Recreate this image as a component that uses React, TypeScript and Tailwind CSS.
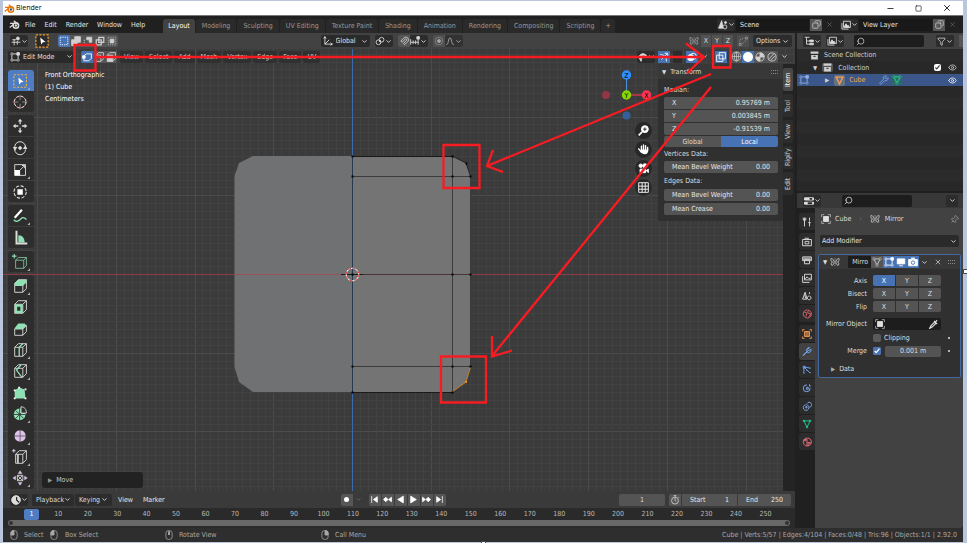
import type { ReactNode } from "react";
import { ChevronDown, Copy, Eye, Filter, Minus, Pin, Search, Square, Wrench, X } from "lucide-react";

const mint = "#8fe0b4";
const light = "#dcdcdc";
const lilac = "#dcc3e8";

const tabs = [
  "Modeling",
  "Sculpting",
  "UV Editing",
  "Texture Paint",
  "Shading",
  "Animation",
  "Rendering",
  "Compositing",
  "Scripting",
];

const meshMenus = ["View", "Select", "Add", "Mesh", "Vertex", "Edge", "Face", "UV"];

const frames = Array.from({ length: 25 }, (_, i) => (i + 1) * 10);

function Svg({ children, className = "size-[10px]" }: { children: ReactNode; className?: string }) {
  return (
    <svg viewBox="0 0 16 16" fill="none" stroke="currentColor" strokeWidth="1.4" className={`shrink-0 ${className}`}>
      {children}
    </svg>
  );
}

function Chevron() {
  return <ChevronDown className="pointer-events-none size-[7px] shrink-0" strokeWidth={3} />;
}

function BlenderLogo({ orange = false }: { orange?: boolean }) {
  return (
    <Svg className="size-[11px]">
      <path d="M7 2.500 13 7.500M1.500 6.500H10M1 12.500 6.500 8" stroke={orange ? "#ea7600" : light} strokeWidth="1.8" />
      <circle cx="10" cy="9.5" r="4" stroke={orange ? "#ea7600" : light} strokeWidth="2.2" />
      <circle cx="10" cy="9.5" r="1.7" fill={orange ? "#265787" : light} stroke="none" />
    </Svg>
  );
}

const icons = {
  editor: (
    <Svg>
      <path d="M1 10h14M5 5v10M10 8v6M2 6h6" />
      <circle cx="11" cy="4" r="2.4" fill="currentColor" />
    </Svg>
  ),
  editMode: (
    <Svg>
      <path d="M5 3h6M3 5v6M13 5v6M5 13h6" />
      <path d="M1.5 1.5h3v3h-3zM1.5 11.5h3v3h-3zM11.5 11.5h3v3h-3z" strokeWidth="1" />
      <path d="M11 1h4v4h-4z" fill="currentColor" />
    </Svg>
  ),
  axes: (
    <Svg>
      <path d="M3 1v12h12M3 13l7-7M1 4l2-3 2 3M12 11l3 2-3 2" />
    </Svg>
  ),
  pivot: (
    <Svg>
      <circle cx="5.5" cy="10" r="3.8" />
      <circle cx="10.5" cy="6" r="3.8" />
      <circle cx="8" cy="8" r="1" fill="currentColor" />
    </Svg>
  ),
  magnet: (
    <Svg>
      <path d="M3 8 8 3a4 4 0 0 1 6 6l-5 5-2-2 5-5a1.4 1.4 0 0 0-2-2l-5 5z" />
    </Svg>
  ),
  snap: (
    <Svg>
      <path d="M1 5v9M1 10h13M5 7v6M9 7v6M13 6v8" />
      <path d="M11 1h4v4h-4z" fill="currentColor" />
    </Svg>
  ),
  proportional: (
    <Svg>
      <circle cx="8" cy="8" r="6" strokeWidth=".8" />
      <circle cx="8" cy="8" r="2.4" fill="currentColor" />
    </Svg>
  ),
  falloff: (
    <Svg>
      <path d="M2 14c4 0 3-11 6-11s2 11 6 11" />
    </Svg>
  ),
  merge: (
    <Svg>
      <path d="M3 13V6l7-3M6 13l7-6" strokeDasharray="2 1.500" />
      <path d="M2 12h3v3H2zM12 2h3v3h-3z" />
    </Svg>
  ),
  butterfly: (
    <Svg>
      <path d="M8 2v12" strokeDasharray="2 1.500" strokeWidth="1" />
      <path
        d="M6.500 7C5 3 3 2 1.500 2.500 1 5 2 7.500 4 8c-2 .5-2.500 3-1.500 5C4 14 6 12 6.500 9zM9.500 7C11 3 13 2 14.500 2.500 15 5 14 7.500 12 8c2 .5 2.500 3 1.500 5-1.500 1-3.500-1-4-4z"
        strokeWidth="1.200"
      />
    </Svg>
  ),
  scene: (
    <Svg>
      <path d="M6 1 1 13h7z" fill="currentColor" />
      <circle cx="11" cy="11" r="3.2" />
      <circle cx="12" cy="4" r="1.6" fill="currentColor" />
    </Svg>
  ),
  layers: (
    <Svg>
      <path d="M4 2h11v10H4zM1.500 5v9.500H12" />
      <path d="m5 11 3-5 2 3 1-1 2 3z" fill="currentColor" />
    </Svg>
  ),
  tree: (
    <Svg>
      <path d="M1 2h8M4 2v11h4M4 8h4" />
      <path d="M9 6.500h6v2.500H9zM9 11.500h6V14H9z" fill="currentColor" />
    </Svg>
  ),
  visibility: (
    <Svg>
      <path d="M1 8c3-7 11-7 14 0M1 8l4 7 1-6z" fill="currentColor" />
      <circle cx="9" cy="7" r="2" fill="#2c2c2c" />
    </Svg>
  ),
  box: (
    <Svg className="size-[9px]">
      <path d="M1 1h14v4H1zM2 7h12v8H2z" fill="currentColor" stroke="none" />
      <path d="M6 9.500h4" stroke="#333" strokeWidth="2" />
    </Svg>
  ),
  mesh: (
    <Svg>
      <path d="M3 3h10L8 13z" />
      <path d="M1.500 1.500h3v3h-3zM11.500 1.500h3v3h-3zM6.500 11.500h3v3h-3z" strokeWidth="1" fill="#2b2b2b" />
    </Svg>
  ),
  object: (
    <Svg>
      <path d="M4 4h8v8H4z" fill="currentColor" />
      <path d="M1 5V1h4M11 1h4v4M15 11v4h-4M5 15H1v-4" strokeWidth="1" />
    </Svg>
  ),
  properties: (
    <Svg>
      <path d="M2 4.500h12M2 11.500h12" strokeWidth="5" strokeLinecap="round" />
      <path d="M9 4.500h4M6 11.500h7" strokeWidth="3" stroke="#2c2c2c" />
    </Svg>
  ),
  camera: (
    <Svg>
      <path d="M1 4h14v10H1z" fill="currentColor" />
      <path d="M5 2h6" strokeWidth="2" />
      <circle cx="8" cy="9" r="2.8" stroke="#4772b3" />
    </Svg>
  ),
  monitor: (
    <Svg>
      <path d="M2 3h12v8H2z" fill="currentColor" />
      <path d="M5 14h6" />
    </Svg>
  ),
  sphere: (
    <Svg className="size-[11px]">
      <circle cx="8" cy="8" r="6.500" strokeWidth="1" />
      <path d="M8 1.500v13M1.500 8h13" strokeWidth="1" />
      <ellipse cx="8" cy="8" rx="3" ry="6.500" strokeWidth="1" />
    </Svg>
  ),
};

const cubeOutline = <path d="M2 5h9v10H2zM2 5l4-4h9l-4 4M15 1v10l-4 4" stroke={light} strokeWidth="1" />;

const tools = [
  [
    {
      name: "Select Box",
      icon: (
        <>
          <path d="M1 1h14v14H1z" stroke="#f0b240" strokeDasharray="2.500 1.500" strokeWidth="1.200" />
          <path d="m6 4 6 5-3 .5L7 12z" fill="#fff" stroke="none" />
        </>
      ),
      more: true,
    },
    {
      name: "Cursor",
      icon: (
        <>
          <circle cx="8" cy="8" r="6.500" stroke="#b96a6a" strokeWidth="1" />
          <circle cx="8" cy="8" r="6.500" stroke="#eee" strokeWidth="1" strokeDasharray="3 2.100" />
          <path d="M8 0v6M8 10v6M0 8h6M10 8h6" stroke="#909090" strokeWidth="1" />
        </>
      ),
    },
  ],
  [
    {
      name: "Move",
      icon: (
        <>
          <path d="M8 2v4M8 10v4M2 8h4M10 8h4" stroke={light} />
          <path d="M8 0 5.500 3h5zM8 16l-2.500-3h5zM0 8l3-2.500v5zM16 8l-3-2.500v5z" fill={light} stroke="none" />
        </>
      ),
    },
    {
      name: "Rotate",
      icon: (
        <>
          <path d="M2 7a6 6 0 0 1 12 0M14 9.500a6 6 0 0 1-12 0" stroke={light} strokeWidth="1.100" />
          <path d="m0 7 2.200 4L5 7zM11 9l3-4 2 4zM8 5.500 10.500 8 8 10.500 5.500 8z" fill={light} stroke="none" />
        </>
      ),
    },
    {
      name: "Scale",
      icon: (
        <>
          <path d="M2 2h12v12H2zM8 8l5-5M10 3h3v3" stroke={light} strokeWidth="1" />
          <path d="M2 8h6v6H2z" fill="#fff" stroke="none" />
        </>
      ),
      more: true,
    },
    {
      name: "Transform",
      icon: (
        <>
          <circle cx="8" cy="8" r="6.800" stroke={light} strokeWidth="1.200" strokeDasharray="3.500 1.800" />
          <path d="M5 5h6v6H5z" fill="#fff" stroke="none" />
        </>
      ),
    },
  ],
  [
    {
      name: "Annotate",
      icon: (
        <>
          <path d="M2 10 10 1" stroke="#fff" strokeWidth="2.400" />
          <path d="M1 12c2 4 6 1 8-1s5-1 6 1" stroke={mint} />
        </>
      ),
      more: true,
    },
    {
      name: "Measure",
      icon: (
        <>
          <path d="M6 5c5 0 7 4 7 8H6z" fill={mint} stroke="none" />
          <path d="M4 0v14h12" stroke={light} strokeWidth="2.200" />
        </>
      ),
    },
  ],
  [
    {
      name: "Add Cube",
      icon: (
        <>
          <path d="M3 6h9v9H3zM3 6l3-3h9l-3 3M15 3v9l-3 3" stroke={mint} strokeWidth="1" opacity=".8" />
          <path d="M1.500-1v5M-1 1.500h5" stroke={mint} strokeWidth="1.200" />
        </>
      ),
      more: true,
    },
  ],
  [
    {
      name: "Extrude Region",
      icon: (
        <>
          {cubeOutline}
          <path d="m2 5 4-4h9l-4 4zM2 5h9v3H2zM11 5l4-4v3l-4 4z" fill={mint} stroke="none" />
        </>
      ),
      more: true,
    },
    {
      name: "Inset Faces",
      icon: (
        <>
          {cubeOutline}
          <path d="M3.500 6.500h6v7h-6z" stroke={mint} strokeWidth="2.500" />
        </>
      ),
    },
    {
      name: "Bevel",
      icon: (
        <>
          <path d="M2 8v7h9V8M15 4v7l-4 4M2 8h9l4-4" stroke={light} strokeWidth="1" />
          <path d="m2 7 4-5h7l2 2-4 4H2z" fill={mint} stroke="none" />
        </>
      ),
    },
    {
      name: "Loop Cut",
      icon: (
        <>
          {cubeOutline}
          <path d="M7 15V5l4-4" stroke={mint} strokeWidth="1.500" />
        </>
      ),
      more: true,
    },
    {
      name: "Knife",
      icon: (
        <>
          {cubeOutline}
          <path d="m9 1-5 6 6 8" stroke={mint} strokeWidth="1.500" />
        </>
      ),
      more: true,
    },
    {
      name: "Poly Build",
      icon: (
        <>
          <path d="m2 5 5-3 6 2 1 10H2z" fill={mint} stroke="none" />
          <path d="M1 4h2v2H1zM6 1h2v2H6zM13 3h2v2h-2zM1 13h2v2H1zM13 13h2v2h-2z" fill="#fff" stroke="none" />
        </>
      ),
    },
    {
      name: "Spin",
      icon: (
        <>
          <circle cx="7.500" cy="8.500" r="6.500" fill={mint} stroke="none" />
          <path d="M1 8.500h13M7.500 2v13M3 4l9 9M12 4l-9 9" stroke="#2b2b2b" strokeWidth=".9" />
          <path d="M9 0v7h6c0-4-2-7-6-7z" fill="#303030" stroke={light} strokeWidth="1" />
        </>
      ),
      more: true,
    },
    {
      name: "Smooth",
      icon: (
        <>
          <rect x="2" y="2" width="12" height="12" rx="5" fill={lilac} stroke="none" />
          <path d="M2 8h12M8 2v12" stroke="#6b5674" strokeWidth="1" />
        </>
      ),
      more: true,
    },
    {
      name: "Edge Slide",
      icon: (
        <>
          <path d="M3 5h8v10H3zM3 5l4-4h8l-4 4M15 1v10l-4 4M6 15V5" stroke={light} strokeWidth="1" />
          <path d="M5 5v10M1-1v4M-1 1h4" stroke={lilac} strokeWidth="1.200" />
        </>
      ),
      more: true,
    },
    {
      name: "Shrink Fatten",
      icon: (
        <>
          <path d="M5 5h6v6H5zM5 5l6 6M11 5l-6 6" stroke={light} strokeWidth="1" />
          <path d="M8 0 6 3h4zM8 16l-2-3h4zM0 8l3-2v4zM16 8l-3-2v4z" fill={lilac} stroke={lilac} strokeWidth=".6" />
        </>
      ),
      more: true,
    },
  ],
];

function Menu({ children }: { children: ReactNode }) {
  return <button className="h-[12px] rounded-[2px] px-[3px] text-[#e6e6e6] hover:bg-white/10">{children}</button>;
}

function IconMenu({ icon, label }: { icon: ReactNode; label: string }) {
  return (
    <button
      aria-label={label}
      className="flex h-[12px] w-[18px] shrink-0 items-center justify-center rounded-[2px] bg-[#2c2c2c] text-[#dcdcdc]"
    >
      {icon}
      <Chevron />
    </button>
  );
}

function Toggle({ label, on = false, children }: { label: string; on?: boolean; children: ReactNode }) {
  return (
    <button
      aria-label={label}
      className={`flex h-[12px] w-[12px] shrink-0 items-center justify-center ${
        on ? "bg-[#4772b3] text-white" : "bg-[#565656] text-[#d0d0d0]"
      }`}
    >
      {children}
    </button>
  );
}

function Dropdown({ label, value, icon }: { label: string; value: string; icon?: ReactNode }) {
  return (
    <label className="flex h-[12px] w-full items-center gap-[3px] rounded-[2px] bg-[#2a2a2a] px-[2px] text-[#e0e0e0]">
      {icon}
      <select aria-label={label} className="min-w-0 flex-1 appearance-none bg-transparent outline-none">
        <option>{value}</option>
      </select>
      <Chevron />
    </label>
  );
}

function NumberField({ label, value, className = "" }: { label: string; value: string; className?: string }) {
  return (
    <label className={`flex h-[12px] items-center bg-[#545454] px-[8px] text-[#e6e6e6] ${className}`}>
      <span className="shrink-0">{label}</span>
      <input defaultValue={value} className="w-0 min-w-0 flex-1 bg-transparent text-right outline-none" />
    </label>
  );
}

function SearchBox({ label }: { label: string }) {
  return (
    <label className="flex h-[12px] w-[70px] items-center rounded-[2px] bg-[#1d1d1d] px-[2px]">
      <Search className="size-[9px] shrink-0 -scale-x-100" />
      <input aria-label={label} className="w-0 flex-1 bg-transparent outline-none" />
    </label>
  );
}

function DataBlock({ label, value, icon }: { label: string; value: string; icon: ReactNode }) {
  return (
    <div className="flex h-[12px] items-center gap-px">
      <IconMenu icon={icon} label={label} />
      <input aria-label={label} defaultValue={value} className="h-[12px] w-[73px] bg-[#191919] px-[4px] text-[#e6e6e6]" />
      <Toggle label={`New ${label}`}>
        <Copy className="size-[9px] -scale-x-100" />
      </Toggle>
      <button aria-label={`Remove ${label}`} className="flex w-[12px] justify-center text-[#777]">
        <X className="size-[7px]" />
      </button>
    </div>
  );
}

function TopBar() {
  return (
    <nav className="flex h-[17px] items-center bg-[#202020] pl-[6px] pr-[5px]">
      <BlenderLogo />
      <div className="ml-[2px] flex gap-[3px]">
        {["File", "Edit", "Render", "Window", "Help"].map((item) => (
          <Menu key={item}>{item}</Menu>
        ))}
      </div>
      <div className="ml-[15px] flex gap-px self-end">
        <button className="h-[14px] rounded-t-[3px] bg-[#424242] px-[5px] text-white">Layout</button>
        {tabs.map((tab) => (
          <button key={tab} className="h-[14px] rounded-t-[3px] bg-[#2a2a2a] px-[6px] text-[#989898]">
            {tab}
          </button>
        ))}
        <button className="h-[14px] rounded-t-[3px] bg-[#2a2a2a] px-[4px] text-[#a0a0a0]">+</button>
      </div>
      <div className="ml-auto flex gap-[5px]">
        <DataBlock label="Scene" value="Scene" icon={icons.scene} />
        <DataBlock label="View Layer" value="View Layer" icon={icons.layers} />
      </div>
    </nav>
  );
}

function ToolHeader() {
  return (
    <header className="flex h-[16px] items-center bg-[#424242] pl-[7px] pr-[3px]">
      <IconMenu icon={icons.editor} label="Editor type" />
      <div className="ml-[7px]">
        <Svg className="size-[14px]">
          <path d="M1 1h14v14H1z" fill="#2b2b2b" stroke="#f0a030" strokeDasharray="2.500 1.500" />
          <path d="m6 4 6 5-3 .5L7 12z" fill="#fff" stroke="none" />
        </Svg>
      </div>
      <div className="ml-[9px] flex overflow-hidden rounded-[2px]">
        <Toggle label="Set" on>
          <Svg>
            <path d="M2 2h12v12H2z" strokeDasharray="2 1.500" />
          </Svg>
        </Toggle>
        <Toggle label="Extend">
          <Svg>
            <path d="M6 1h9v9h-5v5H1V6h5z" fill="currentColor" />
          </Svg>
        </Toggle>
        <Toggle label="Subtract">
          <Svg>
            <path d="M6 2h8v8h-4V6H6z" fill="currentColor" />
            <path d="M2 6v8h8" strokeDasharray="2 1.500" />
          </Svg>
        </Toggle>
        <Toggle label="Difference">
          <Svg>
            <path d="M6 2h8v8h-4v4H2V6h4zM6 6h4v4H6z" strokeWidth="2" />
          </Svg>
        </Toggle>
        <Toggle label="Intersect">
          <Svg>
            <path d="M2 2h12v12H2z" strokeDasharray="2 1.500" strokeWidth="1" />
            <path d="M5 5h6v6H5z" fill="currentColor" />
          </Svg>
        </Toggle>
      </div>
      <div className="mx-auto flex gap-[5px] pr-[24px]">
        <div className="w-[49px]">
          <Dropdown label="Orientation" value="Global" icon={icons.axes} />
        </div>
        <IconMenu icon={icons.pivot} label="Pivot point" />
        <div className="flex overflow-hidden rounded-[2px]">
          <Toggle label="Snap">{icons.magnet}</Toggle>
          <IconMenu icon={icons.snap} label="Snap to" />
        </div>
        <div className="flex overflow-hidden rounded-[2px] opacity-70">
          <Toggle label="Proportional editing">{icons.proportional}</Toggle>
          <IconMenu icon={icons.falloff} label="Falloff" />
        </div>
      </div>
      <div className="flex items-center">
        <span className="text-[#b0b0b0]">{icons.butterfly}</span>
        <div className="ml-[2px] flex gap-px">
          {["X", "Y", "Z"].map((axis) => (
            <button key={axis} className="h-[12px] w-[10px] bg-[#525252] text-[#d8d8d8]">
              {axis}
            </button>
          ))}
        </div>
        <div className="mx-[4px] opacity-60">
          <Toggle label="Auto merge">{icons.merge}</Toggle>
        </div>
        <button className="flex h-[12px] w-[39px] items-center justify-between rounded-[2px] bg-[#2c2c2c] px-[3px] text-[#e0e0e0]">
          Options
          <Chevron />
        </button>
      </div>
    </header>
  );
}

function MeshHeader() {
  return (
    <div className="flex h-[15px] items-center pl-[5px] pr-[7px]">
      <div className="w-[67px]">
        <Dropdown label="Mode" value="Edit Mode" icon={icons.editMode} />
      </div>
      <div className="ml-[6px] flex overflow-hidden rounded-[2px]">
        <Toggle label="Vertex select" on>
          <Svg>
            <path d="M3 10v4h8l4-4V3H7L3 6" />
            <path d="M1 6h4v4H1z" fill="currentColor" />
          </Svg>
        </Toggle>
        <Toggle label="Edge select">
          <Svg>
            <path d="M3 5h8v10H3zM3 5l4-4h8v10l-4 4" />
          </Svg>
        </Toggle>
        <Toggle label="Face select">
          <Svg>
            <path d="M2 5h9v10H2z" fill="currentColor" />
            <path d="m2 5 4-4h9v10l-4 4" />
          </Svg>
        </Toggle>
      </div>
      <div className="ml-[3px] flex gap-[2px]">
        {meshMenus.map((item) => (
          <button key={item} className="h-[12px] rounded-[2px] bg-[#303030] px-[4px] text-[#d8d8d8]">
            {item}
          </button>
        ))}
      </div>
      <div className="ml-auto flex items-center gap-[3px]">
        <IconMenu icon={icons.visibility} label="Visibility" />
        <Toggle label="Gizmos" on>
          <Svg>
            <path d="M2 4c6 0 10 4 10 11M4 12l9-9M9 2h5v5" />
          </Svg>
        </Toggle>
        <div className="mr-px h-[12px] w-[9px] bg-[#2c2c2c]" />
        <Toggle label="Overlays" on>
          <Svg>
            <circle cx="6" cy="9" r="5" fill="currentColor" />
            <circle cx="10" cy="7" r="5" />
          </Svg>
        </Toggle>
        <button aria-label="Overlay options" className="mr-[4px] text-[#dcdcdc]">
          <Chevron />
        </button>
        <Toggle label="X-Ray" on>
          <Svg>
            <path d="M1 5h10v10H1zM5 1h10v10H5z" />
          </Svg>
        </Toggle>
        <div className="flex overflow-hidden rounded-[2px]">
          <Toggle label="Wireframe">{icons.sphere}</Toggle>
          <Toggle label="Solid" on>
            <span className="size-[10px] rounded-full bg-white" />
          </Toggle>
          <Toggle label="Material preview">
            <Svg>
              <circle cx="8" cy="8" r="6.500" />
              <path d="M8 1.500v6.500h6.500A6.500 6.500 0 0 0 8 1.500zM8 8v6.500A6.500 6.500 0 0 1 1.500 8z" fill="currentColor" />
            </Svg>
          </Toggle>
          <Toggle label="Rendered">
            <Svg>
              <circle cx="8" cy="8" r="6.500" />
              <path d="M3 11 11 3M6 13l7-7" />
            </Svg>
          </Toggle>
        </div>
        <button aria-label="Shading options" className="text-[#dcdcdc]">
          <Chevron />
        </button>
      </div>
    </div>
  );
}

/* Grid, axes and the mirrored cube. One major grid cell is 78.7 units. */
function Scene() {
  const lines = Array.from({ length: 121 }, (_, i) => i - 60);
  const verts = [
    [352, 156], [452, 156], [466, 163], [352, 176], [452, 176], [470, 176],
    [352, 274], [452, 274], [470, 274], [352, 366], [452, 366], [470, 366],
    [352, 392], [452, 392],
  ];

  return (
    <svg viewBox="3 49 792 442" preserveAspectRatio="xMidYMid slice" className="absolute inset-0 size-full">
      <rect x="3" y="49" width="792" height="442" fill="#3b3b3b" />
      <g shapeRendering="crispEdges">
        {lines.map((n) => (
          <path
            key={n}
            d={`M${352.5 + n * 7.87} 49V491M3 ${274.5 + n * 7.87}H795`}
            stroke={n % 10 === 0 ? "#4b4b4b" : "#424242"}
          />
        ))}
        <path d="M3 274.500H795" stroke="#8c3c46" />
      </g>
      <path d="M253 156h99v236h-99l-14-10-4.500-15V176l4.500-13z" fill="#6f7173" />
      <path d="M352 156h100l14 7 4.500 13v191l-4.500 15-14 10H352z" fill="#747474" />
      <g shapeRendering="crispEdges" stroke="#3b3b3b">
        <path d="M235 274.500h117" stroke="#9a5158" />
        <path d="M352 274.500h118" stroke="#4a3438" />
        <path d="M352 176.500h118M352 366.500h118M452.500 156v236M470.500 176v191" />
        <path d="M352 156.500h100M352 392.500h100M341 274.500h22" stroke="#1a1a1a" />
        <path d="M352.500 49V156M352.500 392V491" stroke="#3a6ba8" />
        <path d="M352.500 156V392" stroke="#263a50" />
      </g>
      <path d="m452 156 14 7 4.500 13" fill="none" stroke="#222" />
      <path d="m470.500 367-4.500 15-14 10" fill="none" stroke="#c8812f" />
      {verts.map(([x, y]) => (
        <rect key={`${x}-${y}`} x={x - 0.5} y={y - 0.5} width="2" height="2" fill="#000" />
      ))}
      <rect x="465" y="381" width="2" height="2" fill="#ff8500" />
      <circle cx="352.500" cy="274.500" r="6.300" fill="none" stroke="#fff" />
      <circle cx="352.500" cy="274.500" r="6.300" fill="none" stroke="#e03030" strokeDasharray="2.500 2.450" />
    </svg>
  );
}

function Toolbar() {
  return (
    <div className="flex w-[31px] flex-col gap-[3px] pb-[2px] pl-[5px] pt-[6px]">
      {tools.map((group, g) => (
        <div
          key={g}
          className={`flex flex-col overflow-hidden rounded-[3px] ${
            g === tools.length - 1 ? "min-h-0 flex-1" : g > 0 ? "gap-px" : ""
          }`}
        >
          {group.map((tool) => (
            <button
              key={tool.name}
              aria-label={tool.name}
              className={`flex min-h-[21px] flex-1 items-center justify-center ${
                tool.name === "Select Box" ? "bg-[#4f7dc4]" : "bg-[#2d2d2d]"
              }`}
            >
              <svg viewBox="-2 -2 22 20" fill="none" strokeWidth="1.400" className="h-[18px] w-[20px]">
                {tool.icon}
                {tool.more && <path d="M19 15v3h-3z" fill="#aaa" />}
              </svg>
            </button>
          ))}
        </div>
      ))}
    </div>
  );
}

function NavGizmo() {
  return (
    <div className="flex w-[56px] flex-col gap-[2px] pt-[6px]">
      <svg viewBox="603 70 50 50" className="size-[50px]" fontSize="7" textAnchor="middle">
        <path d="M627.500 75v20" stroke="#4a90d9" />
        <path d="M627.500 95h20" stroke="#a83648" strokeWidth="2" />
        <circle cx="607" cy="95" r="4" fill="#923645" />
        <circle cx="627.500" cy="115.500" r="4" fill="#33609a" />
        <circle cx="627.500" cy="75" r="4.700" fill="#2f8fff" />
        <circle cx="627.500" cy="95" r="4.700" fill="#86d900" />
        <circle cx="647.500" cy="95" r="4.700" fill="#ff3352" />
        <text x="627.500" y="77.500">Z</text>
        <text x="627.500" y="97.500">Y</text>
        <text x="647.500" y="97.500">X</text>
      </svg>
      <div className="mr-[6px] flex flex-col gap-[2px] self-end text-white">
        <button aria-label="Zoom" className="flex size-[17px] items-center justify-center rounded-full bg-[#282828]">
          <Svg className="size-[11px]">
            <circle cx="10" cy="6" r="5" fill="currentColor" />
            <path d="m1 15 5-5" strokeWidth="2.500" />
            <path d="M10 3.500v5M7.500 6h5" stroke="#282828" />
          </Svg>
        </button>
        <button aria-label="Pan" className="flex size-[17px] items-center justify-center rounded-full bg-[#282828]">
          <Svg className="size-[11px]">
            <path d="M5 9V3M8 8V1.500M11 8V2.500M14 9V5M1 7l4 5" strokeWidth="2" strokeLinecap="round" />
            <path d="M4 8h11c0 5-2 7-5 7s-5-2-6-4z" fill="currentColor" stroke="none" />
          </Svg>
        </button>
        <button aria-label="Camera" className="flex size-[17px] items-center justify-center rounded-full bg-[#282828]">
          <Svg className="size-[11px]">
            <circle cx="4" cy="4" r="2.500" fill="currentColor" />
            <circle cx="10" cy="4" r="3" fill="currentColor" />
            <path d="M3 9h8v5H3zM12 11l3-2v5z" fill="currentColor" />
          </Svg>
        </button>
        <button aria-label="Grid" className="flex size-[17px] items-center justify-center rounded-full bg-[#282828]">
          <Svg className="size-[11px]">
            <path d="M1 1h14v14H1zM6 1v14M10.500 1v14M1 6h14M1 10.500h14" strokeWidth="1.300" />
          </Svg>
        </button>
      </div>
    </div>
  );
}

function Grip() {
  return (
    <Svg className="size-[8px]">
      <path d="M0 5h16M0 11h16" strokeDasharray="2 2" strokeWidth="2" opacity=".5" />
    </Svg>
  );
}

function TransformPanel() {
  return (
    <aside className="w-[125px] self-start bg-[#303030] pb-[6px] text-[#dedede]">
      <h2 className="flex h-[15px] items-center gap-[4px] bg-[#383838] px-[4px]">
        <span className="text-[6px]">▼</span>
        Transform
        <span className="ml-auto">
          <Grip />
        </span>
      </h2>
      <div className="flex flex-col pl-[6px] pr-[5px]">
        <p className="mt-[6px] mb-[2px]">Median:</p>
        <div className="flex flex-col gap-px overflow-hidden rounded-[2px]">
          <NumberField label="X" value="0.95769 m" />
          <NumberField label="Y" value="0.003845 m" />
          <NumberField label="Z" value="-0.91539 m" />
        </div>
        <div className="mt-px flex h-[11px] overflow-hidden rounded-[2px]">
          <button className="flex-1 bg-[#545454]">Global</button>
          <button className="flex-1 bg-[#4772b3] text-white">Local</button>
        </div>
        <p className="my-[2px]">Vertices Data:</p>
        <NumberField label="Mean Bevel Weight" value="0.00" className="rounded-[2px]" />
        <p className="my-[3px]">Edges Data:</p>
        <NumberField label="Mean Bevel Weight" value="0.00" className="rounded-[2px]" />
        <NumberField label="Mean Crease" value="0.00" className="mt-[2px] rounded-[2px]" />
      </div>
    </aside>
  );
}

function Viewport() {
  return (
    <section className="relative min-h-0 flex-1 overflow-hidden">
      <Scene />
      <div className="relative flex h-full flex-col">
        <MeshHeader />
        <div className="flex min-h-0 flex-1">
          <Toolbar />
          <div className="flex flex-1 flex-col justify-between pb-[3px] pl-[8px] pt-[5px]">
            <div className="pl-[3px] leading-[12px] text-white">
              <p>Front Orthographic</p>
              <p>(1) Cube</p>
              <p>Centimeters</p>
            </div>
            <button className="flex h-[16px] w-[101px] items-center gap-[4px] rounded-[3px] bg-[#222] px-[6px] text-[#c8c8c8]">
              <span className="text-[6px] text-[#999]">▶</span>
              Move
            </button>
          </div>
          <NavGizmo />
          <TransformPanel />
          <div className="flex w-[12px] flex-col gap-[3px] bg-[#242424] pt-[4px] text-[#c8c8c8]">
            {["Item", "Tool", "View", "Rigify", "Edit"].map((tab) => (
              <button
                key={tab}
                className={`flex min-h-[23px] w-[10px] rotate-180 items-center justify-center rounded-[2px] px-0 py-[5px] [writing-mode:vertical-rl] ${
                  tab === "Item" ? "bg-[#484848] text-white" : "bg-[#2d2d2d]"
                }`}
              >
                {tab}
              </button>
            ))}
          </div>
        </div>
      </div>
    </section>
  );
}

const transport = [
  { name: "Jump to start", d: "M3 2v12M13 3v10L6 8z" },
  { name: "Previous keyframe", d: "M5 4 1 8l4 4 4-4zM15 4v8l-5-4z" },
  { name: "Play reverse", d: "M13 2v12L3 8z" },
  { name: "Play", d: "M3 2v12l10-6z" },
  { name: "Next keyframe", d: "m11 4 4 4-4 4-4-4zM1 4v8l5-4z" },
  { name: "Jump to end", d: "M13 2v12M3 3v10l7-5z" },
];

function Timeline() {
  return (
    <section className="bg-[#2a2a2a]">
      <header className="flex h-[17px] items-center bg-[#3a3a3a] pl-[7px] pr-[4px] text-[#dedede]">
        <IconMenu
          label="Timeline editor"
          icon={
            <Svg>
              <circle cx="8" cy="8" r="7" fill="currentColor" />
              <path d="M9 3v5l4 4" stroke="#2c2c2c" strokeWidth="2" />
            </Svg>
          }
        />
        <div className="ml-[4px] flex gap-px">
          <button className="flex h-[12px] w-[42px] items-center justify-between rounded-[2px] bg-[#2c2c2c] px-[4px]">
            Playback
            <Chevron />
          </button>
          <button className="flex h-[12px] w-[37px] items-center justify-between rounded-[2px] bg-[#2c2c2c] px-[4px]">
            Keying
            <Chevron />
          </button>
        </div>
        <div className="ml-[3px] flex gap-[4px]">
          <Menu>View</Menu>
          <Menu>Marker</Menu>
        </div>
        <div className="mx-auto flex gap-[4px]">
          <div className="flex overflow-hidden rounded-[2px]">
            <Toggle label="Auto keying">
              <span className="size-[5px] rounded-full bg-white" />
            </Toggle>
            <button aria-label="Keying options" className="flex h-[12px] w-[12px] items-center justify-center text-[#666]">
              <Chevron />
            </button>
          </div>
          <div className="flex gap-px overflow-hidden rounded-[2px]">
            {transport.map((b) => (
              <Toggle key={b.name} label={b.name}>
                <Svg className="size-[9px]">
                  <path d={b.d} fill="#fff" stroke="#fff" />
                </Svg>
              </Toggle>
            ))}
          </div>
        </div>
        <input
          aria-label="Current frame"
          defaultValue="1"
          className="h-[12px] w-[46px] rounded-[2px] bg-[#545454] text-center"
        />
        <div className="ml-[4px] flex gap-px overflow-hidden rounded-[2px]">
          <Toggle label="Preview range">
            <Svg>
              <circle cx="8" cy="9" r="5.500" />
              <path d="M8 5v4l2 1M6 1h4M8 1v2M13 3l1 1" />
            </Svg>
          </Toggle>
          <NumberField label="Start" value="1" className="w-[55px]" />
          <NumberField label="End" value="250" className="w-[53px]" />
        </div>
      </header>
      <div className="flex h-[12px] items-center pl-[11px] pr-[15px] text-[#b8b8b8]">
        <div className="w-0 flex-1">
          <span className="ml-[10px] block w-[15px] rounded-[2px] bg-[#4f7dc4] text-center leading-[11px] text-white">1</span>
        </div>
        {frames.map((frame) => (
          <span key={frame} className="w-0 flex-1 text-center">
            {frame}
          </span>
        ))}
      </div>
      <div className="mx-[5px] mb-[2px] flex h-[6px] items-center justify-between rounded-full bg-[#686868] px-px">
        <span className="size-[4px] rounded-full bg-[#333]" />
        <span className="size-[4px] rounded-full bg-[#333]" />
      </div>
    </section>
  );
}

function Outliner() {
  return (
    <section className="flex h-[158px] flex-col overflow-hidden bg-[#2b2b2b] text-[#d0d0d0]">
      <header className="flex h-[16px] shrink-0 items-center bg-[#424242] pl-[6px]">
        <IconMenu icon={icons.tree} label="Outliner editor" />
        <div className="ml-[5px]">
          <IconMenu icon={icons.layers} label="Display mode" />
        </div>
        <div className="ml-[10px]">
          <SearchBox label="Filter outliner" />
        </div>
        <div className="ml-auto flex">
          <IconMenu icon={<Filter className="size-[9px]" />} label="Filter" />
          <span className="ml-[5px] h-[12px] w-[4px] bg-[#565656]" />
        </div>
      </header>
      <ul className="flex-1 bg-[repeating-linear-gradient(#2b2b2b_0_12px,#282828_12px_24px)]">
        <li className="flex h-[12px] items-center gap-[5px] pl-[13px]">
          {icons.box}
          Scene Collection
        </li>
        <li className="flex h-[13px] items-center gap-[5px] pl-[16px] pr-[6px]">
          <span className="text-[6px]">▼</span>
          <span className="rounded-[2px] bg-[#555] px-px">{icons.box}</span>
          Collection
          <input
            type="checkbox"
            aria-label="Enable Collection"
            defaultChecked
            className="ml-auto size-[7px] accent-white"
          />
          <Eye className="ml-[2px] size-[9px]" />
        </li>
        <li className="flex h-[12px] items-center bg-[#3b5689] pl-[2px] pr-[6px]">
          <span className="text-[#8fb2ec]">{icons.editMode}</span>
          <span className="ml-[16px] text-[6px]">▶</span>
          <span className="ml-[5px] rounded-[2px] bg-[#66727f] text-[#f29b5c]">
            <Svg className="size-[11px]">
              <path d="M3 3h10L8 13z" strokeWidth="2" />
            </Svg>
          </span>
          <span className="ml-[4px] text-[#f2a640]">Cube</span>
          <Wrench className="ml-[14px] size-[10px] text-[#79a6e8]" />
          <span className="ml-[3px] bg-[#2c6a68] text-[#2fd9a0]">{icons.mesh}</span>
          <Eye className="ml-auto size-[9px] text-white" />
        </li>
      </ul>
    </section>
  );
}

const propertyTabs = [
  { name: "Tool", color: "text-[#d0d0d0]", d: "M4 1v6M2 1v4h4V1M4 6v9M12 1v5M12 7v8M10 9h4", gap: true },
  { name: "Render", color: "text-[#d0d0d0]", d: "M1 4h14v10H1zM4 2h7M5 7h6v4H5z" },
  { name: "Output", color: "text-[#d0d0d0]", d: "M1 3h14v6H1zM4 8h8v6H4zM2 5h12M2 7h12" },
  { name: "View Layer", color: "text-[#d0d0d0]", d: "M4 2h11v9H4zM1 5v10h11M5 10l3-4 3 3 3-1" },
  { name: "Scene", color: "text-[#d0d0d0]", d: "M5 2 1 13h7zM4 5l2 7M11 8a3 3 0 1 0 1 0M12 2v3" },
  { name: "World", color: "text-[#d5606e]", d: "M8 1.500a6.500 6.500 0 1 0 1 0M3 4l5 3-2 5M10 2l-1 4 5 2-3 5", gap: true },
  { name: "Object", color: "text-[#e0914f]", d: "M4 4h8v8H4zM5 6h6M5 8h6M5 10h6M1 4V1h3M12 1h3v3M15 12v3h-3M4 15H1v-3" },
  { name: "Modifiers", color: "text-[#72a8f5]", d: "m2 14 8-8M1.500 13.500 9 6M14 3l-3 3-2-2 3-3a4 4 0 0 0-4 6M14 3a4 4 0 0 1-6 5", active: true },
  { name: "Particles", color: "text-[#6c9be0]", d: "M3 3v10M3 3l10 10M3 3l10 2M2 2h3v3H2zM12 5h2M12 12h2M2 13h2M7 9h2" },
  { name: "Physics", color: "text-[#7aa5e6]", d: "M8 3a5.500 5.500 0 1 0 5 5M7 7h3v3H7zM12 2v3h2" },
  { name: "Constraints", color: "text-[#7aa5e6]", d: "M6 6a4.500 4.500 0 1 0 1 0M6 9h2v2H6zM8 4a4 4 0 1 1 4 6" },
  { name: "Object Data", color: "text-[#20c490]", d: "M3 3h10L8 13zM2 2h2v2H2zM12 2h2v2h-2zM7 12h2v2H7z" },
  { name: "Material", color: "text-[#e06a78]", d: "M8 1.500a6.500 6.500 0 1 0 1 0M9 9h5M9 11h4M9 13h2M3 4h4M2 6h5M8 2v12" },
];

function AxisRow({ label, active }: { label: string; active?: string }) {
  return (
    <div className="mb-[2px] flex h-[11px] items-center">
      <span className="w-[48px] text-right">{label}</span>
      <div className="ml-[6px] flex gap-px overflow-hidden rounded-[2px]">
        {["X", "Y", "Z"].map((axis) => (
          <button
            key={axis}
            aria-label={`${label} ${axis}`}
            className={`h-[11px] w-[22px] ${axis === active ? "bg-[#4772b3] text-white" : "bg-[#545454]"}`}
          >
            {axis}
          </button>
        ))}
      </div>
    </div>
  );
}

function MirrorPanel() {
  return (
    <div className="mt-[7px] rounded-[2px] border border-[#44699f] bg-[#303030]">
      <header className="mb-[6px] flex h-[14px] items-center bg-[#383838] px-[4px]">
        <span className="text-[6px]">▼</span>
        <span className="ml-[3px]">{icons.butterfly}</span>
        <input
          aria-label="Modifier name"
          defaultValue="Mirro"
          className="ml-[8px] h-[12px] w-0 min-w-[23px] flex-1 bg-[#1d1d1d] pl-[4px]"
        />
        <Toggle label="On cage">{icons.mesh}</Toggle>
        <Toggle label="Edit mode" on>{icons.editMode}</Toggle>
        <Toggle label="Realtime" on>{icons.monitor}</Toggle>
        <Toggle label="Render" on>{icons.camera}</Toggle>
        <span className="ml-[2px]">
          <Chevron />
        </span>
        <button aria-label="Remove modifier" className="mx-[6px]">
          <X className="size-[8px]" />
        </button>
        <Grip />
      </header>
      <AxisRow label="Axis" active="X" />
      <AxisRow label="Bisect" />
      <AxisRow label="Flip" />
      <div className="mt-[6px] flex h-[12px] items-center">
        <label htmlFor="mirror-object" className="w-[48px] text-right whitespace-nowrap">
          Mirror Object
        </label>
        <div className="ml-[6px] flex h-[12px] w-[68px] items-center rounded-[2px] bg-[#1d1d1d] px-[2px]">
          {icons.object}
          <input id="mirror-object" className="w-0 flex-1 bg-transparent outline-none" />
          <Svg>
            <path d="m1 15 2-4 6-6 2 2-6 6zM8 3l5 5M10 5l3-3" strokeWidth="1.800" />
          </Svg>
        </div>
      </div>
      <label className="mt-[2px] flex h-[12px] items-center gap-[3px] pl-[54px] pr-[10px]">
        <input type="checkbox" className="size-[8px] appearance-none rounded-[2px] bg-[#5a5a5a]" />
        Clipping
        <span className="ml-auto size-[2px] rounded-full bg-[#ddd]" />
      </label>
      <div className="mt-px flex h-[12px] items-center pr-[10px]">
        <label htmlFor="merge" className="w-[48px] text-right">
          Merge
        </label>
        <input id="merge" type="checkbox" defaultChecked className="ml-[6px] size-[8px] accent-[#4772b3]" />
        <input
          aria-label="Merge distance"
          defaultValue="0.001 m"
          className="ml-[4px] h-[11px] w-[56px] rounded-[2px] bg-[#545454] text-center"
        />
        <span className="ml-auto size-[2px] rounded-full bg-[#ddd]" />
      </div>
      <button className="mb-[2px] mt-[6px] flex h-[12px] items-center gap-[4px] pl-[12px]">
        <span className="text-[6px] text-[#aaa]">▶</span>
        Data
      </button>
    </div>
  );
}

function Properties() {
  return (
    <section className="flex min-h-0 flex-1 flex-col overflow-hidden rounded-[2px] bg-[#424242] text-[#dedede]">
      <header className="flex h-[15px] shrink-0 items-center bg-[#383838] pl-[6px] pr-[5px]">
        <IconMenu icon={icons.properties} label="Properties editor" />
        <div className="ml-[21px]">
          <SearchBox label="Search properties" />
        </div>
        <button aria-label="Options" className="ml-auto flex h-[12px] w-[12px] items-center justify-center bg-[#2c2c2c]">
          <Chevron />
        </button>
      </header>
      <div className="flex min-h-0 flex-1">
        <div className="flex w-[18px] shrink-0 flex-col gap-px bg-[#202020] pl-[2px] pt-[5px]">
          {propertyTabs.map((tab) => (
            <button
              key={tab.name}
              aria-label={tab.name}
              className={`flex h-[17px] shrink-0 items-center justify-center rounded-l-[3px] ${tab.color} ${
                tab.active ? "bg-[#424242]" : "bg-[#2c2c2c]"
              } ${tab.gap ? "mb-[2px]" : ""}`}
            >
              <Svg>
                <path d={tab.d} strokeWidth="1.600" />
              </Svg>
            </button>
          ))}
        </div>
        <div className="min-w-0 flex-1 pl-[3px] pr-[2px] pt-[5px]">
          <div className="flex h-[12px] items-center pl-[3px] pr-[2px]">
            {icons.object}
            <span className="ml-[4px]">Cube</span>
            <span className="mx-[8px] text-[#777]">›</span>
            {icons.butterfly}
            <span className="ml-[5px]">Mirror</span>
            <Pin className="ml-auto size-[9px] rotate-45 text-[#999]" />
          </div>
          <div className="mt-[10px] px-[2px]">
            <Dropdown label="Add Modifier" value="Add Modifier" />
          </div>
          <MirrorPanel />
        </div>
      </div>
    </section>
  );
}

function Mouse({ side }: { side: "left" | "middle" | "right" }) {
  return (
    <Svg>
      <rect x="3" y="1" width="10" height="14" rx="4" strokeWidth="1.200" />
      {side === "left" && <path d="M3 8V5a4 4 0 0 1 5-4v7z" fill="currentColor" />}
      {side === "middle" && <path d="M8 2v6" strokeWidth="3" />}
      {side === "right" && <path d="M13 8V5a4 4 0 0 0-5-4v7z" fill="currentColor" />}
    </Svg>
  );
}

function StatusBar() {
  return (
    <footer className="flex h-[14px] items-center bg-[#2e2e2e] pl-[6px] pr-[6px] text-[#a8a8a8]">
      <div className="flex w-[40px] items-center gap-[5px]">
        <Mouse side="left" />
        Select
      </div>
      <div className="flex w-[115px] items-center gap-[6px]">
        <Mouse side="left" />
        Box Select
      </div>
      <div className="flex w-[156px] items-center gap-[5px]">
        <Mouse side="middle" />
        Rotate View
      </div>
      <div className="flex items-center gap-[5px]">
        <Mouse side="right" />
        Call Menu
      </div>
      <span className="ml-auto">
        Cube | Verts:5/57 | Edges:4/104 | Faces:0/48 | Tris:96 | Objects:1/1 | 2.92.0
      </span>
    </footer>
  );
}

/* Red marker boxes and arrows drawn over the window */
function Annotations() {
  return (
    <svg viewBox="0 0 967 543" className="pointer-events-none absolute inset-0 size-full" fill="none">
      <g stroke="#f81c22" strokeWidth="2.300">
        <path d="M74.500 45h21v25.500h-21zM713 46h17.500v21.500H713zM443.500 145h36v43h-36zM441 356.500h45v46h-45z" />
        <path d="M95 57h609M686 43.500 704 57l-17 16" />
        <path d="M711 74 487 166M493 150l-6 16 16 6" />
        <path d="M711 87 492 356M492 336v20.500l20-6" />
      </g>
      <path d="M963.500 269.500h4v4h-4zM481.500 541.500h4v4h-4z" fill="#fff" stroke="#444" />
    </svg>
  );
}

export default function App() {
  return (
    <div className="relative flex h-screen flex-col overflow-hidden bg-[#b9c6dd] pb-px pl-[3px] pr-[4px] pt-px font-['DejaVu_Sans_Condensed','DejaVu_Sans',sans-serif] text-[7px] leading-[10px]">
      <div className="flex h-[14px] shrink-0 items-center bg-white pl-px text-black">
        <BlenderLogo orange />
        <h1 className="ml-px font-['Open_Sans',sans-serif]">Blender</h1>
        <div className="ml-auto flex items-center gap-[20px] pr-[11px]">
          <button aria-label="Minimize">
            <Minus className="size-[9px]" />
          </button>
          <button aria-label="Restore">
            <Square className="size-[7px]" />
          </button>
          <button aria-label="Close">
            <X className="size-[10px]" />
          </button>
        </div>
      </div>
      <div className="flex min-h-0 flex-1 flex-col border-t border-[#777]">
        <TopBar />
        <main className="flex min-h-0 flex-1 gap-[2px] bg-[#202020]">
          <div className="flex min-w-0 flex-1 flex-col">
            <ToolHeader />
            <Viewport />
            <Timeline />
          </div>
          <div className="flex w-[166px] shrink-0 flex-col gap-[2px]">
            <Outliner />
            <Properties />
          </div>
        </main>
        <StatusBar />
      </div>
      <Annotations />
    </div>
  );
}
